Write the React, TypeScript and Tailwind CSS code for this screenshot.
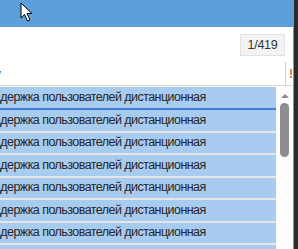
import { Fragment } from "react";

const rows = Array.from({ length: 8 }, (_, i) => i);

const Cursor = () => (
  <svg width="14" height="21" viewBox="0 0 14 21" className="absolute left-[20px] top-[2px]">
    <path
      d="M1 1 L1 16 L4.5 12.5 L7.5 19 L10 18 L7 11.5 L12 11.5 Z"
      fill="#fff"
      stroke="#000"
      strokeWidth="1"
      strokeLinejoin="round"
    />
  </svg>
);

const App = () => {
  return (
    <div className="flex w-[298px] h-[249px] overflow-hidden bg-white font-['Liberation_Sans',Arial,sans-serif]">
      <div className="flex flex-col w-[293px] h-full">
        {/* title bar */}
        <div className="relative h-[27px] shrink-0 bg-[#5c9fdb]">
          <Cursor />
        </div>

        {/* toolbar */}
        <div className="flex justify-end items-start h-[35px] shrink-0 pt-[7px] pr-[8px]">
          <div className="flex items-center justify-center w-[45px] h-[22px] bg-[#f3f3f3] border border-[#e2e2e2] text-[12.5px] tracking-[-0.3px] text-[#333]">
            1/419
          </div>
        </div>

        {/* column header */}
        <div className="flex h-[24px] shrink-0 border-b border-[#d6d6d6]">
          <div className="flex-1 overflow-hidden">
            <span className="block ml-[-6px] mt-[4px] text-[14px] leading-[16px] text-[#3f6db3]">у</span>
          </div>
          <div className="w-px h-[23px] bg-[#d0d0d0]" />
          <div className="w-[7px] flex items-start pl-[4px] pt-[7px]">
            <div className="flex flex-col gap-[1px]">
              <div className="w-[2px] h-[6px] bg-[#d98c32]" />
              <div className="w-[2px] h-[2px] bg-[#d98c32]" />
            </div>
          </div>
        </div>

        {/* list */}
        <div className="flex flex-1 pt-[1px]">
          <div className="w-[276px] overflow-hidden">
            {rows.map((r) => (
              <Fragment key={r}>
                <div
                  className={`flex items-center bg-[#a8cbf0] text-[12.5px] tracking-[-0.55px] text-[#262626] whitespace-nowrap ${
                    r === 0 ? "h-[21px]" : "h-[20.5px]"
                  }`}
                >
                  <span className="ml-[-21px]">Поддержка пользователей дистанционная</span>
                </div>
                <div className={r === 0 ? "h-[2px] bg-[#3c7fd4]" : "h-[2px] bg-[#e6e6e6]"} />
              </Fragment>
            ))}
          </div>
          {/* scrollbar */}
          <div className="relative flex-1 bg-[#fdfdfd]">
            <div className="absolute left-[5px] top-[7px] w-0 h-0 border-l-[4px] border-r-[4px] border-b-[4px] border-l-transparent border-r-transparent border-b-[#8a8a8a]" />
            <div className="absolute left-[4px] top-[16px] w-[9px] h-[54px] rounded-full bg-[#8d8d8d]" />
          </div>
        </div>
      </div>
      <div className="w-px h-full bg-[#5c9fdb]" />
      <div className="flex-1 h-full bg-[#2a2a2a]" />
    </div>
  );
};

export default App;
